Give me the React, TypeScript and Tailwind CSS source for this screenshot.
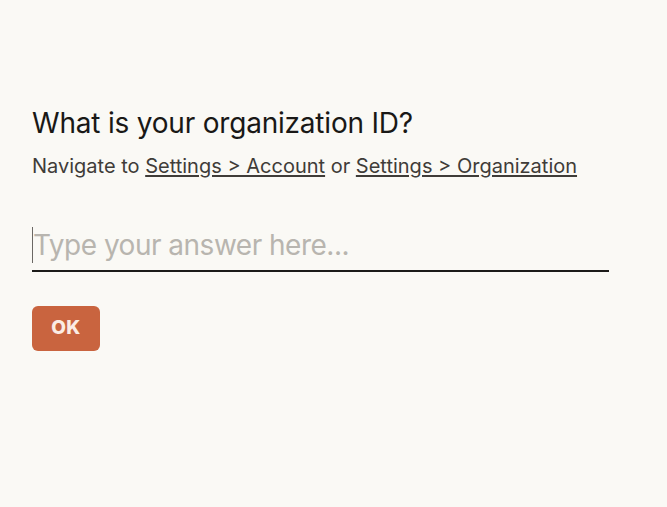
import React from "react";

export default function App() {
  return (
    <div
      className="min-h-[507px] w-full bg-[#faf9f5] pl-[32px] pt-[105px]"
      style={{ fontFamily: "Inter, 'Noto Sans', sans-serif" }}
    >
      <h1 className="text-[28px] leading-[36px] text-[#191816] tracking-[-0.2px]">
        What is your organization ID?
      </h1>
      <p className="mt-[12px] text-[20px] leading-[26px] text-[#3f3c38]">
        Navigate to{" "}
        <span className="underline underline-offset-[2px] decoration-[1.5px]">Settings &gt; Account</span> or{" "}
        <span className="underline underline-offset-[2px] decoration-[1.5px]">Settings &gt; Organization</span>
      </p>
      <div className="mt-[48px] w-[577px] border-b-2 border-[#1c1b19] pb-[7px] flex items-center">
        <div className="w-px h-[36px] bg-[#6b6864]" />
        <span className="text-[28px] leading-[36px] text-[#b8b5af] tracking-[-0.5px]">
          Type your answer here...
        </span>
      </div>
      <button className="mt-[34px] w-[68px] h-[45px] rounded-[6px] bg-[#c9643f] text-[#fbece4] text-[19px] font-extrabold tracking-[0.3px]">
        OK
      </button>
    </div>
  );
}
